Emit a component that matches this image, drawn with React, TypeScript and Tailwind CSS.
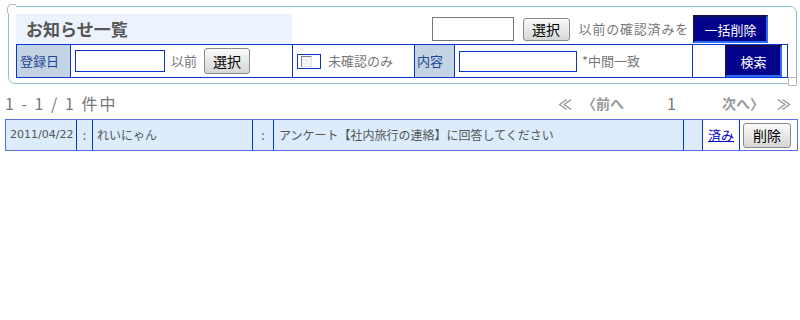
const font = { fontFamily: '"Noto Sans CJK JP", "Liberation Sans", sans-serif' };

const GrayButton = ({ label, className }: { label: string; className: string }) => (
  <button
    className={`flex items-center justify-center rounded-[3px] border border-[#8a8a8a] bg-gradient-to-b from-[#fbfbfb] to-[#d6d6d6] text-[14px] text-black leading-none ${className}`}
  >
    {label}
  </button>
);

const NavyButton = ({ label, className }: { label: string; className: string }) => (
  <button
    className={`flex items-center justify-center border-2 border-t-[#10104a] border-l-[#10104a] border-r-[#2a6cff] border-b-[#2a6cff] bg-[#02028a] text-[13px] text-white leading-none ${className}`}
  >
    {label}
  </button>
);

const Corner = ({ className }: { className: string }) => (
  <span className={`absolute h-[9px] w-[9px] border border-[#b5b5b5] bg-white ${className}`} />
);

export default function App() {
  return (
    <div className="h-[320px] w-[800px] bg-white text-[#666]" style={font}>
      <div className="relative ml-[8px] mt-[6px] h-[78px] w-[789px] rounded-[7px] border border-[#8cbfd0] pl-[7px] pr-[8px] pt-[7px]">
        <Corner className="-left-[2px] -top-[3px] rounded-tl-[5px] border-r-0 border-b-0" />
        <Corner className="-right-[1px] -bottom-[3px] rounded-br-[1px]" />

        <div className="flex h-[30px]">
          <div className="flex w-[276px] items-center bg-[#edf3fd] pl-[10px] text-[17px] font-bold text-[#555]">
            お知らせ一覧
          </div>
          <div className="flex flex-1 items-center justify-end pr-[20px]">
            <input className="h-[24px] w-[82px] border border-[#777] bg-white" />
            <GrayButton label="選択" className="ml-[9px] h-[23px] w-[47px]" />
            <span className="ml-[9px] text-[13px] tracking-[0.8px] text-[#777]">以前の確認済みを</span>
            <NavyButton label="一括削除" className="ml-[4px] h-[28px] w-[75px]" />
          </div>
        </div>

        <div className="flex h-[34px] border border-[#0a34d6] text-[13px]">
          <div className="flex w-[54px] items-center border-r border-[#0a34d6] bg-[#c3d3e3] pl-[3px] text-[#1e4696]">
            登録日
          </div>
          <div className="flex w-[222px] items-center border-r border-[#0a34d6] pl-[4px]">
            <input className="h-[22px] w-[90px] border border-[#0a34d6] bg-white" />
            <span className="ml-[6px] text-[#777]">以前</span>
            <GrayButton label="選択" className="ml-[7px] h-[26px] w-[46px]" />
          </div>
          <div className="flex w-[122px] items-center border-r border-[#0a34d6] pl-[4px]">
            <span className="flex h-[15px] w-[24px] items-start border border-[#0a34d6] pl-[3px] pt-[1px]">
              <span className="h-[11px] w-[11px] border border-t-[#808080] border-l-[#808080] border-r-[#e0e0e0] border-b-[#e0e0e0] bg-[#f4f4f4]" />
            </span>
            <span className="ml-[7px] text-[#777]">未確認のみ</span>
          </div>
          <div className="flex w-[40px] items-center border-r border-[#0a34d6] bg-[#c3d3e3] pl-[2px] text-[#1e4696]">
            内容
          </div>
          <div className="flex w-[238px] items-center border-r border-[#0a34d6] pl-[4px]">
            <input className="h-[21px] w-[118px] border border-[#0a34d6] bg-white" />
            <span className="ml-[5px] text-[#777]">*中間一致</span>
          </div>
          <div className="flex flex-1 items-stretch justify-end pr-[5px]">
            <NavyButton label="検索" className="w-[57px]" />
          </div>
        </div>
      </div>

      <div className="mt-[7px] flex h-[24px] items-center justify-between pl-[5px] text-[16px] text-[#777]">
        <span className="whitespace-pre tracking-[2px]">1 - 1 / 1 件中</span>
        <div className="mr-[7px] flex items-center text-[14px] font-bold text-[#999]">
          <span className="w-[24px]">≪</span>
          <span className="w-[85px]">〈前へ</span>
          <span className="w-[55px] text-[16px] font-normal text-[#777]">1</span>
          <span className="w-[55px]">次へ〉</span>
          <span className="w-[16px]">≫</span>
        </div>
      </div>

      <div className="ml-[5px] mt-[4px] flex h-[32px] w-[793px] border border-[#5a6ee0] text-[12px] text-[#555]">
        <div className="flex w-[71px] items-center border-r border-[#0a34d6] bg-[#dcecfc] pl-[4px]" style={{ fontFamily: '"DejaVu Sans", sans-serif', fontSize: '11px' }}>
          2011/04/22
        </div>
        <div className="flex w-[16px] items-center justify-center border-r border-[#0a34d6] bg-[#dcecfc]">:</div>
        <div className="flex w-[160px] items-center border-r border-[#0a34d6] bg-[#dcecfc] pl-[4px]">れいにゃん</div>
        <div className="flex w-[21px] items-center justify-center border-r border-[#0a34d6] bg-[#dcecfc]">:</div>
        <div className="flex w-[410px] items-center border-r border-[#0a34d6] bg-[#dcecfc] pl-[5px]">
          アンケート【社内旅行の連絡】に回答してください
        </div>
        <div className="w-[19px] border-r border-[#0a34d6] bg-[#dcecfc]" />
        <div className="flex w-[37px] items-center justify-center border-r border-[#0a34d6] bg-white">
          <a className="text-[13px] text-[#0000cc] underline">済み</a>
        </div>
        <div className="flex flex-1 items-center pl-[3px]">
          <GrayButton label="削除" className="h-[25px] w-[48px]" />
        </div>
      </div>
    </div>
  );
}
